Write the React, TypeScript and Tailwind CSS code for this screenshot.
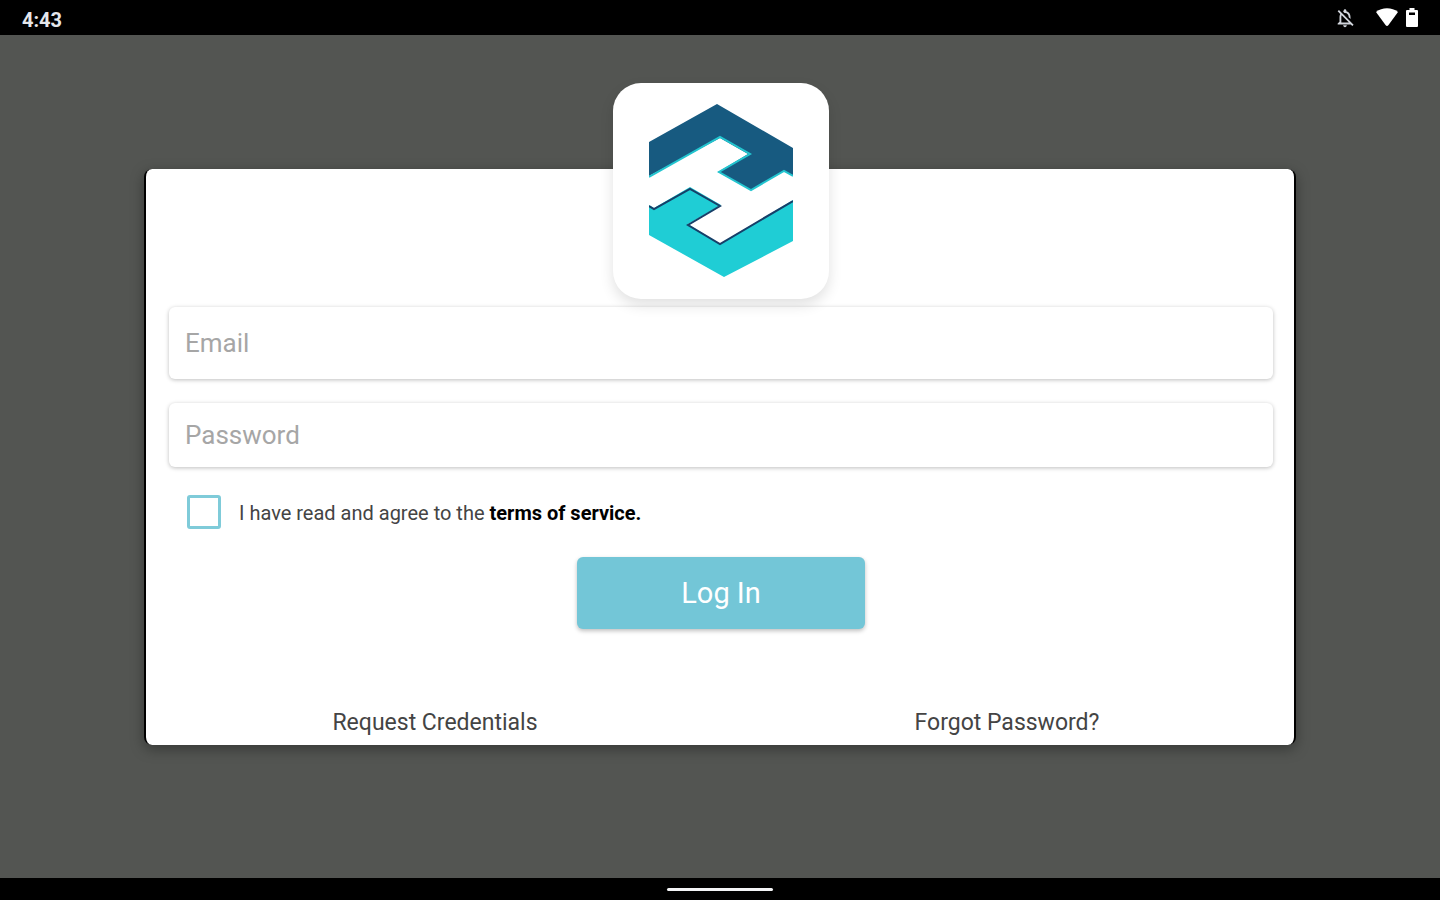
import { MdOutlineNotificationsOff } from "react-icons/md";

function StatusBar() {
  return (
    <header className="flex h-[35px] items-center justify-between bg-black pl-[22px] pr-[22px] text-white">
      <span className="pt-1 text-xl font-bold leading-5 text-gray-200">4:43</span>
      <div className="flex items-center">
        <MdOutlineNotificationsOff className="mr-5 size-[22px] text-gray-300" />
        <svg viewBox="0 0 22 20" className="mr-2 h-5 w-[22px]" fill="currentColor" aria-hidden="true">
          <path d="M0 4C6-1 16-1 22 4L12.500 17Q11 19 9.500 17Z" />
        </svg>
        <svg viewBox="0 0 12 20" className="h-5 w-3" aria-hidden="true">
          <path fill="currentColor" d="M3.500 0h5v2H11a1 1 0 0 1 1 1v15a1 1 0 0 1-1 1H1a1 1 0 0 1-1-1V3a1 1 0 0 1 1-1h2.500z" />
          <path fill="#000" d="M3 4.500h6v2.500H3z" />
        </svg>
      </div>
    </header>
  );
}

function Logo() {
  return (
    <div className="relative -mt-[86px] flex size-[216px] items-center justify-center self-center rounded-[28px] bg-white shadow-[0_6px_14px_rgba(0,0,0,0.12)]">
      <svg viewBox="0 0 144 174" className="h-[174px] w-36" role="img" aria-label="Logo">
        <path fill="#175a80" d="M0 38 68 0l76 44v28l-9-5-33 19-33-18 30-18-28-16L0 72z" />
        <path fill="none" stroke="#23c5cf" strokeWidth="2" d="m0 73 71-40 30 17-31 18 32 18 33-19 9 5" />
        <path fill="#1fcdd5" d="m0 101 5 3 36-21 31 18-33 19 32 20 73-44v41L75 173 0 131z" />
        <path fill="none" stroke="#173f68" strokeWidth="2" d="m0 102 5 3 36-20 30 17-32 19 32 19 73-43" />
      </svg>
    </div>
  );
}

const fieldClass =
  "w-full rounded-md bg-white px-4 text-[26px] leading-8 text-gray-800 outline-none placeholder:text-[#a6a6a6] shadow-[0_1px_4px_rgba(0,0,0,0.26)]";

export default function App() {
  return (
    <div className="flex min-h-screen flex-col bg-[#535552] font-[Roboto,sans-serif]">
      <StatusBar />
      <main className="flex flex-1 items-center justify-center">
        <form
          className="flex w-4/5 flex-col rounded-lg border-x-2 border-black bg-white pl-[23px] pr-[21px] shadow-[0_4px_14px_rgba(0,0,0,0.35)]"
          onSubmit={(e) => e.preventDefault()}
        >
          <Logo />
          <input type="email" aria-label="Email" placeholder="Email" className={`${fieldClass} mt-2 h-[72px]`} />
          <input type="password" aria-label="Password" placeholder="Password" className={`${fieldClass} mt-6 h-16`} />

          <div className="mt-7 flex items-center gap-[18px] pl-[18px]">
            <input
              id="terms"
              type="checkbox"
              className="size-[34px] appearance-none rounded-[3px] border-3 border-[#7fcbd9] bg-white checked:bg-[#73c6d7]"
            />
            <label htmlFor="terms" className="pt-0.5 text-xl text-[#444]">
              I have read and agree to the{" "}
              <a href="#terms-of-service" className="font-bold text-black">
                terms of service.
              </a>
            </label>
          </div>

          <button
            type="submit"
            className="mt-7 h-[72px] w-72 self-center rounded-md bg-[#73c6d7] pt-0.5 text-[29px] text-white shadow-[0_2px_4px_rgba(0,0,0,0.25)]"
          >
            Log In
          </button>

          <div className="-mx-5 mt-20 grid grid-cols-2 pb-2 text-center text-[23px] leading-7 text-[#444]">
            <a href="#request" className="justify-self-center">Request Credentials</a>
            <a href="#forgot" className="justify-self-center">Forgot Password?</a>
          </div>
        </form>
      </main>
      <footer className="flex h-[22px] items-center justify-center bg-black">
        <div className="h-[3px] w-[106px] rounded-full bg-gray-100" />
      </footer>
    </div>
  );
}
